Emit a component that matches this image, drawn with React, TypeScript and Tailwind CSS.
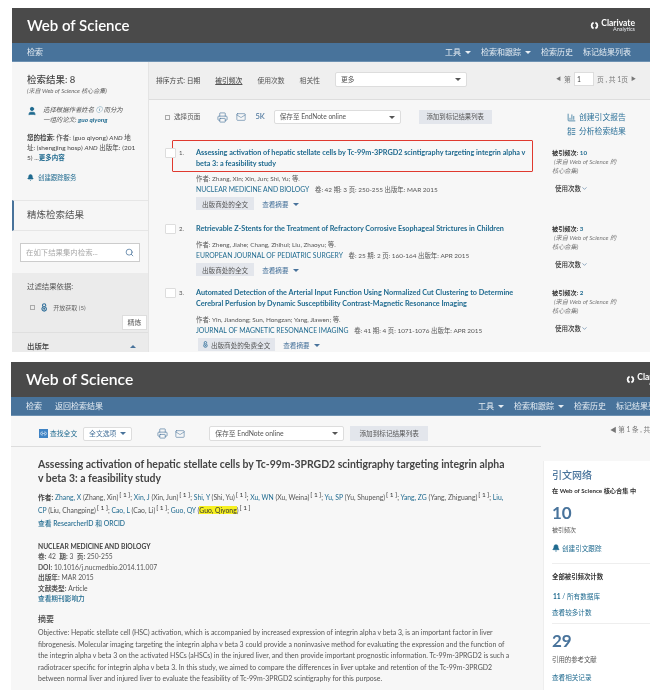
import React from 'react'
import { Search, Printer, Mail, ChevronDown, Bell, User, BarChart3, LayoutList, Link2 } from 'lucide-react'

const font = { fontFamily: 'Lato, "Noto Sans CJK SC", sans-serif' }

function ClarivateLogo({ size = 9 }: { size?: number }) {
  return (
    <svg width={size} height={size} viewBox="0 0 20 20" fill="none" stroke="#fff" strokeWidth="4">
      <path d="M8 3.5 A7 7 0 0 0 8 16.5" />
      <path d="M12 3.5 A7 7 0 0 1 12 16.5" />
    </svg>
  )
}

function OpenAccess({ size = 8 }: { size?: number }) {
  return (
    <svg width={size * 0.7} height={size} viewBox="0 0 14 20" fill="none" stroke="#2f6e99" strokeWidth="2.4">
      <path d="M3.5 8 V5 A3.5 3.5 0 0 1 10.5 5 V7" />
      <circle cx="7" cy="13" r="5" />
      <circle cx="7" cy="13" r="1" fill="#2f6e99" />
    </svg>
  )
}

function Caret() {
  return <span className="inline-block w-0 h-0 border-x-[3px] border-x-transparent border-t-[3px] border-t-current align-middle ml-1" />
}

function Header({ size, clipped }: { size: string; clipped: boolean }) {
  return (
    <div className="h-[35px] shrink-0 bg-[#4a4a4a] flex items-center justify-between pl-[15px] pr-[15px]">
      <span className={`${size} font-semibold text-white`}>Web of Science</span>
      <div className={`flex items-center gap-[2px] text-white ${clipped ? 'mr-[-36px]' : ''}`}>
        <ClarivateLogo />
        <div className="leading-none">
          <div className="text-[8.5px] font-bold">Clarivate</div>
          <div className="text-[5.5px] text-right text-gray-200">Analytics</div>
        </div>
      </div>
    </div>
  )
}

function Nav({ left, clipped }: { left: string[]; clipped: boolean }) {
  return (
    <div className={`h-[19px] shrink-0 bg-[#48739b] border-b border-[#6d91b2] flex items-center justify-between pl-[15px] text-[8px] text-[#e6edf3] ${clipped ? '' : 'pr-[19px]'}`}>
      <div className="flex gap-[13px]">
        {left.map((item) => <span key={item}>{item}</span>)}
      </div>
      <div className={`flex gap-[10px] whitespace-nowrap ${clipped ? 'mr-[-14px]' : ''}`}>
        <span>工具<Caret /></span>
        <span>检索和跟踪<Caret /></span>
        <span>检索历史</span>
        <span>标记结果列表</span>
      </div>
    </div>
  )
}

function ResultRow({
  n, title, authors, journal, meta, cites, free, boxed, height,
}: {
  n: number; title: string[]; authors: string; journal: string; meta: string; cites: number; free?: boolean; boxed?: boolean; height: string
}) {
  return (
    <div className={`flex ${height}`}>
      <div className="w-[380px] shrink-0">
        <div className={`flex w-[361px] border ${boxed ? 'h-[32px] border-[#e0392f] pt-[6px] rounded-[1px]' : 'border-transparent border-y-0'}`}>
          <div className="w-[11px] h-[10px] bg-white border border-[#ddd] rounded-[1px] ml-[-8px] mr-[3px] mt-[1px] shrink-0" />
          <span className="w-[17px] text-[6px] text-[#555] leading-[11px] shrink-0">{n}.</span>
          <div className="text-[7.25px] font-bold text-[#1f6a8f] leading-[11px] whitespace-nowrap">
            {title.map((line) => <div key={line}>{line}</div>)}
          </div>
        </div>
        <div className={`pl-[24px] text-[6.4px] leading-[10px] text-[#555] whitespace-nowrap ${boxed ? 'mt-[2px]' : 'mt-[6px]'}`}>
          <div>作者: {authors}</div>
          <div><span className="text-[#1f6a8f] text-[6.8px]">{journal}</span> <span className="ml-1">{meta}</span></div>
          <div className="flex items-center mt-[2px] gap-2 h-[13px] text-[6.6px]">
            <span className={`bg-[#e3e6ec] h-[13px] flex items-center gap-[3px] ${free ? 'px-[5px] ml-[2px]' : 'px-[6px]'}`}>
              {free && <OpenAccess size={7} />}{free ? '出版商处的免费全文' : '出版商处的全文'}
            </span>
            <span className="text-[#48739b]">查看摘要<Caret /></span>
          </div>
        </div>
      </div>
      <div className={`w-[75px] text-[6.2px] leading-[9px] text-[#777] ${boxed ? 'pt-[8px]' : 'pt-[1px]'}`}>
        <div className="text-[#333] font-bold">被引频次: <span className="text-[#1f6a8f]">{cites}</span></div>
        <div className="italic pl-[2px]">(来自 Web of Science 的</div>
        <div className="italic">核心合集)</div>
        <div className="mt-[9px] ml-[3px] text-[#333] font-medium flex items-center text-[6.5px]">使用次数<ChevronDown size={7} className="text-[#48739b]" /></div>
      </div>
    </div>
  )
}

function CitedAuthor({ a, b, hl }: { a: string; b: string; hl?: boolean }) {
  return (
    <>
      <span className="text-[#1f6a8f]">{a}</span> ({hl ? <mark className="bg-[#f6f021] text-[#333]">{b}</mark> : b})<sup className="text-[#333] text-[6.5px] ml-px">[ 1 ]</sup>
    </>
  )
}

function ResultsPage() {
  return (
    <div className="ml-3 w-[638px] h-[344px] shrink-0 overflow-hidden flex flex-col">
      <Header size="text-[15px]" clipped={false} />
      <Nav left={['检索']} clipped={false} />
      <div className="flex flex-1 min-h-0">
        {/* sidebar */}
        <aside className="w-[137px] shrink-0 bg-[#f6f6f6] flex flex-col border-r border-[#e4e4e4]">
          <div className="pl-[15px] pr-[8px] pt-[12px] h-[138px] shrink-0">
            <div className="text-[9.5px] text-[#444] font-medium leading-[12px]">检索结果: 8</div>
            <div className="text-[6px] italic text-[#666] leading-[8px] mt-[1px]">(来自 Web of Science 核心合集)</div>
            <div className="flex mt-[10px]">
              <User size={10} className="text-[#1f6a8f] fill-[#1f6a8f] shrink-0 mt-px" />
              <div className="ml-[6px] text-[6.4px] italic text-[#555] leading-[10px]">选择根据作者姓名 <span className="text-[#1f6a8f]">ⓘ</span> 而分为<br />一组的论文: <b className="text-[#1f6a8f]">guo qiyong</b></div>
            </div>
            <div className="mt-[8px] text-[6.5px] text-[#444] leading-[10px] whitespace-nowrap">
              <b>您的检索:</b> 作者: (guo qiyong) <i>AND</i> 地<br />址: (shengjing hosp) <i>AND</i> 出版年: (201<br />5) ...<b className="text-[#1f6a8f]">更多内容</b>
            </div>
            <div className="mt-[10px] text-[6.4px] text-[#1f6a8f] flex items-center gap-1"><Bell size={7} fill="currentColor" />创建跟踪服务</div>
          </div>
          <div className="h-[31px] shrink-0 border-y border-[#e6e6e6] border-l-2 border-l-[#48739b] flex items-center pl-[13px] text-[9.5px] text-[#555]">精炼检索结果</div>
          <div className="h-[42px] shrink-0 px-[8px] pt-[12px]">
            <div className="h-[19px] bg-white border border-[#ccc] flex items-center justify-between px-[5px] text-[7.4px] text-[#aaa]">
              在如下结果集内检索...
              <Search size={9} className="text-[#48739b]" />
            </div>
          </div>
          <div className="flex-1 bg-[#ebebeb] pt-[8px]">
            <div className="pl-[15px] text-[7.4px] text-[#555]">过滤结果依据:</div>
            <div className="flex items-center pl-[18px] mt-[11px] text-[6px] text-[#666]">
              <span className="w-[5px] h-[5px] border border-[#aaa] mr-[6px]" />
              <span className="mr-[6px] flex"><OpenAccess size={9} /></span>开放获取 (5)
            </div>
            <div className="flex justify-end pr-px mt-[3px]">
              <span className="bg-white text-[#555] text-[7px] h-[15px] w-[25px] flex items-center justify-center border border-[#ddd]">精炼</span>
            </div>
            <div className="border-t border-[#dfdfdf] mt-[2px] pl-[15px] pr-[12px] pt-[8px] text-[7.4px] text-[#444] font-medium flex justify-between items-center">
              出版年<span className="w-0 h-0 border-x-[3px] border-x-transparent border-b-[3px] border-b-[#48739b]" />
            </div>
          </div>
        </aside>
        {/* main */}
        <main className="flex-1 bg-[#f7f7f7] flex flex-col min-w-0">
          <div className="h-[38px] shrink-0 bg-[#efefef] border-b border-[#ddd] flex items-center pl-[7px] text-[6.8px] text-[#555]">
            <span className="text-[#444]">排序方式: 日期</span>
            <span className="ml-[15px] underline font-medium">被引频次</span>
            <span className="ml-[15px]">使用次数</span>
            <span className="ml-[15px]">相关性</span>
            <div className="ml-[15px] w-[132px] h-[15px] bg-white border border-[#ddd] rounded-[2px] flex items-center justify-between pl-[5px] pr-[5px] mt-[-3px]">更多<Caret /></div>
            <div className="ml-auto mr-[14px] flex items-center gap-[3px] text-[#777] mt-[-3px]">
              <span className="text-[5px]">◀</span><span>第</span>
              <span className="w-[20px] h-[14px] bg-white border border-[#ddd] text-[#444] pl-[2px] leading-[13px]">1</span>
              <span>页 , 共 1页</span><span className="text-[5px]">▶</span>
            </div>
          </div>
          <div className="flex-1">
            <div className="h-[40px] flex pl-[16px]">
              <div className="flex items-center h-[34px] text-[6.6px] text-[#555] w-[402px] shrink-0">
                <span className="w-[5px] h-[5px] border border-[#aaa] mr-[4px]" />
                <span>选择页面</span>
                <Printer size={11} className="ml-[17px] text-[#48739b]" strokeWidth={1.4} />
                <Mail size={10} className="ml-[8px] text-[#48739b]" strokeWidth={1.4} />
                <span className="ml-[9px] text-[#48739b] font-medium text-[7.5px]">5K</span>
                <div className="ml-[9px] w-[127px] h-[14px] bg-white border border-[#ddd] rounded-[2px] flex items-center justify-between px-[5px] shrink-0">保存至 EndNote online<Caret /></div>
                <span className="ml-[18px] w-[73px] h-[14px] bg-[#e3e6ec] flex items-center justify-center text-[6.4px] shrink-0">添加到标记结果列表</span>
              </div>
              <div className="pt-[10px] text-[7.8px] leading-[14px] text-[#2a6f97] w-[70px] shrink-0">
                <div className="flex items-center gap-[3px]"><BarChart3 size={9} />创建引文报告</div>
                <div className="flex items-center gap-[3px]"><LayoutList size={9} />分析检索结果</div>
              </div>
            </div>
            <div className="pl-[23px]">
              <ResultRow boxed height="h-[83px]" n={1} title={['Assessing activation of hepatic stellate cells by Tc-99m-3PRGD2 scintigraphy targeting integrin alpha v', 'beta 3: a feasibility study']} authors="Zhang, Xin; Xin, Jun; Shi, Yu; 等." journal="NUCLEAR MEDICINE AND BIOLOGY" meta="卷: 42  期: 3  页: 250-255  出版年: MAR 2015" cites={10} />
              <ResultRow height="h-[64px]" n={2} title={['Retrievable Z-Stents for the Treatment of Refractory Corrosive Esophageal Strictures in Children']} authors="Zheng, Jiahe; Chang, Zhihui; Liu, Zhaoyu; 等." journal="EUROPEAN JOURNAL OF PEDIATRIC SURGERY" meta="卷: 25  期: 2  页: 160-164  出版年: APR 2015" cites={3} />
              <ResultRow free height="h-[65px]" n={3} title={['Automated Detection of the Arterial Input Function Using Normalized Cut Clustering to Determine', 'Cerebral Perfusion by Dynamic Susceptibility Contrast-Magnetic Resonance Imaging']} authors="Yin, Jiandong; Sun, Hongzan; Yang, Jiawen; 等." journal="JOURNAL OF MAGNETIC RESONANCE IMAGING" meta="卷: 41  期: 4  页: 1071-1076  出版年: APR 2015" cites={2} />
            </div>
          </div>
        </main>
      </div>
    </div>
  )
}

function RecordPage() {
  return (
    <div className="ml-[11px] mt-[10px] w-[639px] h-[328px] shrink-0 overflow-hidden flex flex-col bg-[#f7f7f7]">
      <Header size="text-[15.7px]" clipped />
      <Nav left={['检索', '返回检索结果']} clipped />
      <div className="h-[31px] shrink-0 flex">
        <div className="w-[530px] shrink-0 border-b border-[#ddd] flex items-center pt-[5px] pl-[28px] text-[6.8px] text-[#555]">
          <span className="w-[9px] h-[9px] bg-[#3f83c4] mr-[2px] flex items-center justify-center"><Link2 size={7} className="text-white" /></span>
          <span className="text-[#1f6a8f]">查找全文</span>
          <span className="ml-[6px] w-[49px] h-[14px] bg-white border border-[#ddd] rounded-[2px] flex items-center justify-center text-[#48739b]">全文选项<Caret /></span>
          <Printer size={11} className="ml-[25px] text-[#48739b]" strokeWidth={1.4} />
          <Mail size={10} className="ml-[7px] text-[#48739b]" strokeWidth={1.4} />
          <div className="ml-[24px] w-[135px] h-[15px] bg-white border border-[#ddd] rounded-[2px] flex items-center justify-between px-[5px] shrink-0">保存至 EndNote online<Caret /></div>
          <span className="ml-[6px] w-[78px] h-[15px] bg-[#e3e6ec] flex items-center justify-center text-[6.6px] shrink-0">添加到标记结果列表</span>
        </div>
        <div className="flex-1 whitespace-nowrap pt-[9px] pl-[69px] text-[6.6px] text-[#777]">◀ 第 1 条 , 共</div>
      </div>
      <div className="flex flex-1 min-h-0">
        <div className="w-[532px] shrink-0 pl-[27px] pt-[10px]">
          <h1 className="text-[10.45px] font-bold text-[#444] leading-[14px] whitespace-nowrap">Assessing activation of hepatic stellate cells by Tc-99m-3PRGD2 scintigraphy targeting integrin alpha<br />v beta 3: a feasibility study</h1>
          <div className="mt-[6px] text-[6.8px] leading-[13px] text-[#555] whitespace-nowrap">
            <b className="text-[#444]">作者: </b>
            <CitedAuthor a="Zhang, X" b="Zhang, Xin" />; <CitedAuthor a="Xin, J" b="Xin, Jun" />; <CitedAuthor a="Shi, Y" b="Shi, Yu" />; <CitedAuthor a="Xu, WN" b="Xu, Weina" />; <CitedAuthor a="Yu, SP" b="Yu, Shupeng" />; <CitedAuthor a="Yang, ZG" b="Yang, Zhiguang" />; <span className="text-[#1f6a8f]">Liu,</span>
            <br />
            <CitedAuthor a="CP" b="Liu, Changping" />; <CitedAuthor a="Cao, L" b="Cao, Li" />; <CitedAuthor a="Guo, QY" b="Guo, Qiyong" hl />
            <br />
            <span className="text-[#1f6a8f] font-medium">查看 ResearcherID 和 ORCID</span>
          </div>
          <div className="mt-[11px] text-[6.7px] leading-[10.4px] text-[#555]">
            <div className="font-bold text-[#444]">NUCLEAR MEDICINE AND BIOLOGY</div>
            <div><b>卷:</b> 42 &nbsp;<b>期:</b> 3 &nbsp;<b>页:</b> 250-255</div>
            <div><b>DOI:</b> 10.1016/j.nucmedbio.2014.11.007</div>
            <div><b>出版年:</b> MAR 2015</div>
            <div><b>文献类型:</b> Article</div>
            <div className="text-[#1f6a8f] font-medium">查看期刊影响力</div>
          </div>
          <div className="mt-[11px] text-[8px] font-medium text-[#444] leading-[11px]">摘要</div>
          <div className="text-[6.95px] leading-[11.4px] text-[#555] mt-[2px] whitespace-nowrap">
            Objective: Hepatic stellate cell (HSC) activation, which is accompanied by increased expression of integrin alpha v beta 3, is an important factor in liver<br />
            fibrogenesis. Molecular imaging targeting the integrin alpha v beta 3 could provide a noninvasive method for evaluating the expression and the function of<br />
            the integrin alpha v beta 3 on the activated HSCs (aHSCs) in the injured liver, and then provide important prognostic information. Tc-99m-3PRGD2 is such a<br />
            radiotracer specific for integrin alpha v beta 3. In this study, we aimed to compare the differences in liver uptake and retention of the Tc-99m-3PRGD2<br />
            between normal liver and injured liver to evaluate the feasibility of Tc-99m-3PRGD2 scintigraphy for this purpose.
          </div>
        </div>
        <aside className="flex-1 bg-white mt-[14px] pl-[8px] pt-[7px] border-l border-[#eee] whitespace-nowrap">
          <div className="text-[10px] text-[#48739b] font-medium leading-[14px]">引文网络</div>
          <div className="text-[6.2px] font-bold text-[#333] mt-[3.5px] leading-[9px]">在 Web of Science 核心合集 中</div>
          <div className="text-[17px] font-bold text-[#48739b] leading-[22px] mt-[7.5px]">10</div>
          <div className="text-[6px] text-[#555] leading-[9px] mt-[0.5px]">被引频次</div>
          <div className="text-[6.6px] text-[#1f6a8f] leading-[10px] flex items-center gap-[2px] mt-[9.5px]"><Bell size={8} fill="currentColor" />创建引文跟踪</div>
          <div className="border-t border-[#eee] mt-[10px] pt-[7.5px] text-[6.4px] font-bold text-[#333] leading-[9px]">全部被引频次计数</div>
          <div className="text-[6.6px] text-[#1f6a8f] leading-[10px] mt-[10.5px] ml-px"><b>11</b> / 所有数据库</div>
          <div className="text-[6.6px] text-[#1f6a8f] leading-[10px] mt-[6px]">查看较多计数</div>
          <div className="border-t border-[#eee] mt-[6px] text-[17px] font-bold text-[#48739b] leading-[22px] pt-[6px]">29</div>
          <div className="text-[6.4px] text-[#555] leading-[10px] mt-[3px]">引用的参考文献</div>
          <div className="text-[6.6px] text-[#1f6a8f] leading-[10px] mt-[7px]">查看相关记录</div>
        </aside>
      </div>
    </div>
  )
}

export default function App() {
  return (
    <div className="w-[669px] h-[696px] bg-white pt-2 flex flex-col overflow-hidden blur-[0.3px]" style={font}>
      <ResultsPage />
      <RecordPage />
    </div>
  )
}
